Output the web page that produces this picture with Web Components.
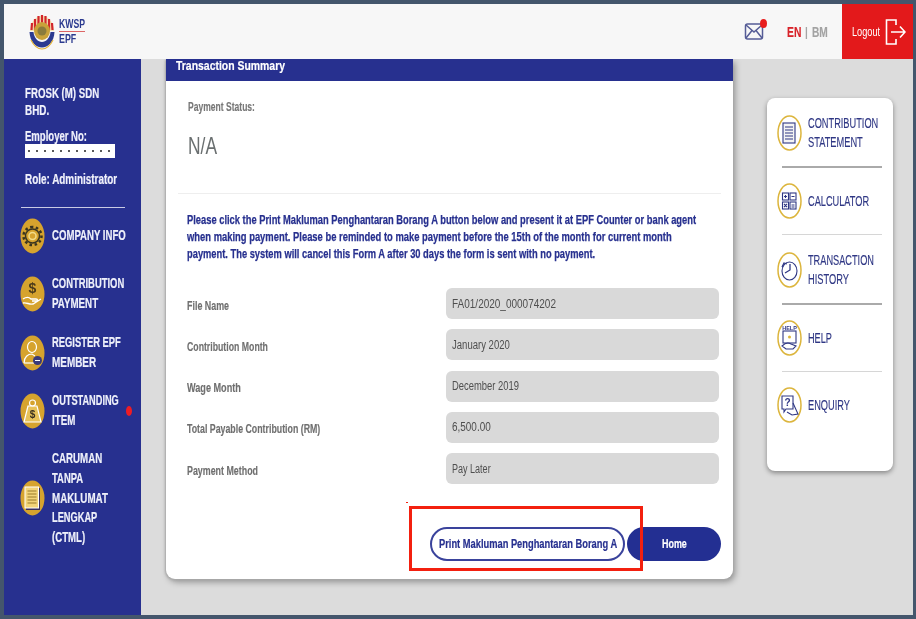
<!DOCTYPE html>
<html><head><meta charset="utf-8"><title>KWSP EPF</title>
<style>
html,body{margin:0;height:100%;overflow:hidden;background:#44566c;font-family:"Liberation Sans",Arial,sans-serif}
</style></head><body>
<kwsp-app></kwsp-app>
<script>
/* s-t: real text fitted to a target width by horizontal scaling */
class ST extends HTMLElement{
  constructor(){super();this.attachShadow({mode:'open'}).innerHTML=`<style>:host{display:inline-block;white-space:nowrap}span{display:inline-block;transform-origin:0 50%}</style><span><slot></slot></span>`}
  connectedCallback(){
    const w=+this.getAttribute('w');if(!w)return;
    const s=this.shadowRoot.querySelector('span');
    const n=s.offsetWidth;
    this.style.width=w+'px';
    if(n)s.style.transform=`scaleX(${w/n})`;
  }
}
customElements.define('s-t',ST);

class KwspHeader extends HTMLElement{
  constructor(){super();this.attachShadow({mode:'open'}).innerHTML=`<style>
  :host{display:flex;height:55px;background:#f7f7f7;align-items:center;position:relative;z-index:2}
  .logo{display:flex;align-items:center;margin-left:24px;gap:3px}
  .lt{display:flex;flex-direction:column;color:#2b3a8f;font-weight:700;font-size:13px;line-height:14px}
  .lt hr{margin:0;border:0;height:1px;background:#d66;width:26px}
  .sp{flex:1}
  .mail{position:relative;width:21px;height:21px;margin-right:22px;margin-top:-1px}
  .mail i{position:absolute;right:-2px;top:-2px;width:7px;height:9px;border-radius:50%;background:#e81e1e}
  .lang{display:flex;align-items:center;font-weight:700;font-size:14px;color:#a3a3a3;margin-right:14px;-webkit-text-stroke:.15px currentColor}
  .lang .en{color:#d8232a}
  .lang b{width:11px;text-align:center;font-weight:400;font-size:13px}
  .out{width:71px;height:55px;background:#e3191b;color:#fff;display:flex;align-items:center;font-size:12.5px;box-sizing:border-box;padding-left:10px;gap:5px}
  </style>
  <div class="logo">
    <svg width="28" height="37" viewBox="0 0 28 37">
      <path d="M2 18A12 15 0 0 1 26 18Z" fill="#f4e2b4"/>
      <g stroke="#d2262b" stroke-width="2.200"><path d="M3.500 17 4 10M7 17V6M10.500 17V3M14 17V2M17.500 17V3M21 17V6M24.500 17 24 10"/></g>
      <path d="M1.500 19C2 29 8 34.500 14 34.500S26 29 26.500 19h-4C22 25 18 29 14 29S6 25 5.500 19Z" fill="#2b3a90"/>
      <path d="M3 27C6 33 10 36 14 36S22 33 25 27" fill="none" stroke="#e1b33a" stroke-width="1.200"/>
      <ellipse cx="14" cy="18" rx="8" ry="9" fill="#c9a23a"/><circle cx="14" cy="18" r="4.500" fill="#8a7b3c"/>
    </svg>
    <div class="lt"><s-t w="26">KWSP</s-t><hr><s-t w="17">EPF</s-t></div>
  </div>
  <div class="sp"></div>
  <div class="mail">
    <svg width="21" height="21" viewBox="0 0 21 21" fill="none" stroke="#555c96" stroke-width="1.500"><rect x="1.500" y="3" width="17" height="15" rx="2"/><path d="M2 4 10 11 18 4M2 17 8 9.500M18 17 12 9.500"/></svg>
    <i></i>
  </div>
  <div class="lang"><s-t class="en" w="14">EN</s-t><b>|</b><s-t w="16">BM</s-t></div>
  <div class="out"><s-t w="28">Logout</s-t>
    <svg width="21" height="28" viewBox="0 0 21 28" fill="none" stroke="#fff" stroke-width="1.600"><path d="M11 7V2H1.500V26H11V21"/><path d="M6 14H20M15 8.500 20 14 15 19.500"/></svg>
  </div>`}
}
customElements.define('kwsp-header',KwspHeader);

class NavItem extends HTMLElement{
  constructor(){super();this.attachShadow({mode:'open'}).innerHTML=`<style>
  :host{display:flex;align-items:center;gap:7px;padding-left:16px;color:#eef0fa;font-weight:700;font-size:14px;line-height:19.7px;position:relative}
  .ic{width:25px;height:36px;flex:none;display:block}
  .t{display:flex;flex-direction:column;align-items:flex-start}
  ::slotted(i){position:absolute;left:122px;bottom:14px;width:6px;height:10px;border-radius:50%;background:#ee1c25}
  </style><span class="ic"><slot name="icon"></slot></span><div class="t"><slot></slot></div>`}
}
customElements.define('nav-item',NavItem);

class KwspSidebar extends HTMLElement{
  constructor(){super();
  const oval=(inner)=>`<svg slot="icon" width="25" height="36" viewBox="0 0 25 36"><ellipse cx="12.500" cy="18" rx="12" ry="17.500" fill="#d6a32e"/>${inner}</svg>`;
  this.attachShadow({mode:'open'}).innerHTML=`<style>
  :host{display:block;width:137px;background:#27308f;color:#f0f1fb;font-weight:700;font-size:14px;flex:none;box-sizing:border-box;padding-top:26px;-webkit-text-stroke:.2px currentColor}
  .info{padding-left:21px;line-height:17px}
  .info s-t{display:block}
  .mask{width:90px;height:14px;background:#fff;margin-bottom:13px;background-image:radial-gradient(circle,#555 0.7px,transparent 1px);background-size:8px 8px;background-position:0 3px;background-repeat:repeat-x}
  hr{border:0;height:1px;background:#c9cbe4;margin:19px 16px 0 17px}
  .nav{display:flex;flex-direction:column}
  .c{display:flex;flex-direction:column}
  </style>
  <div class="info">
    <s-t w="74">FROSK (M) SDN</s-t><s-t w="24">BHD.</s-t>
    <s-t w="62" style="margin-top:9px;line-height:16px">Employer No:</s-t><div class="mask"></div>
    <s-t w="92">Role: Administrator</s-t>
  </div>
  <hr>
  <div class="nav">
    <nav-item style="margin-top:10px">${oval(`<g fill="none" stroke="#3a3520" stroke-width="1.500"><circle cx="12.500" cy="18" r="7"/><circle cx="12.500" cy="18" r="3.500" stroke="#f2dc8a"/><path stroke-dasharray="2.500 2.500" stroke-width="2.500" d="M12.500 9a9 9 0 1 0 .01 0"/></g>`)}<s-t w="74">COMPANY INFO</s-t></nav-item>
    <nav-item style="margin-top:20px">${oval(`<text x="12.500" y="17" text-anchor="middle" font-size="14" font-family="Liberation Sans" fill="#4a3a1a" style="-webkit-text-stroke:0">$</text><path d="M3 23c3-2 6-2 8 0h5c2 0 2 2 0 2h-4M3 27c4-1 6 2 10 1l8-5" fill="none" stroke="#fff" stroke-width="1.400"/>`)}<div class="c"><s-t w="72">CONTRIBUTION</s-t><s-t w="46">PAYMENT</s-t></div></nav-item>
    <nav-item style="margin-top:20px">${oval(`<g fill="none" stroke="#fff" stroke-width="1.200"><ellipse cx="12" cy="12" rx="4.500" ry="5.500"/><path d="M4 28c0-6 4-9 8-9l3 2"/><path d="M4 28h10"/></g><circle cx="17.500" cy="25.500" r="4.500" fill="#3a3a7a"/><path d="M15 25.500h5" stroke="#fff"/>`)}<div class="c"><s-t w="69">REGISTER EPF</s-t><s-t w="44">MEMBER</s-t></div></nav-item>
    <nav-item style="margin-top:18px">${oval(`<path d="M8 13 4 29h17l-4-16Z" fill="#e8c25a" stroke="#fff" stroke-width="1.200"/><circle cx="12.500" cy="10" r="3" fill="none" stroke="#fff" stroke-width="1.200"/><text x="12.500" y="25" text-anchor="middle" font-size="10" font-weight="700" font-family="Liberation Sans" fill="#3a3020" style="-webkit-text-stroke:0">$</text>`)}<div class="c"><s-t w="67">OUTSTANDING</s-t><s-t w="23">ITEM</s-t></div><i></i></nav-item>
    <nav-item style="margin-top:19px">${oval(`<rect x="6" y="8" width="14" height="22" fill="#3a3060"/><rect x="5" y="7" width="13.500" height="21" fill="#f2d479" stroke="#fff"/><path d="M7.500 11h9M7.500 14h9M7.500 17h9M7.500 20h9M7.500 23h9" stroke="#9a7a2a"/>`)}<div class="c"><s-t w="50">CARUMAN</s-t><s-t w="31">TANPA</s-t><s-t w="56">MAKLUMAT</s-t><s-t w="45">LENGKAP</s-t><s-t w="33">(CTML)</s-t></div></nav-item>
  </div>`}
}
customElements.define('kwsp-sidebar',KwspSidebar);

class FormRow extends HTMLElement{
  constructor(){super();this.attachShadow({mode:'open'}).innerHTML=`<style>
  :host{display:flex;align-items:center;height:31px;font-size:12.500px}
  .l{width:259px;font-weight:700;color:#6f6f6f;padding-top:4px;-webkit-text-stroke:.15px currentColor}
  .v{width:273px;height:31px;background:#d9d9d9;border-radius:6px;display:flex;align-items:center;padding-left:6px;box-sizing:border-box;color:#4f4f4f;font-size:12.500px}
  </style><div class="l"><slot name="l"></slot></div><div class="v"><slot name="v"></slot></div>`}
}
customElements.define('form-row',FormRow);

class SummaryCard extends HTMLElement{
  constructor(){super();this.attachShadow({mode:'open'}).innerHTML=`<style>
  :host{display:block;width:567px;height:520px;background:#fff;border-radius:0 0 9px 9px;box-shadow:-1px 1px 2px #aaa,2px 3px 6px rgba(0,0,0,.35);position:relative;flex:none;font-family:"Liberation Sans",sans-serif}
  .h{height:22px;background:#27308f;color:#fff;font-weight:700;font-size:13.500px;padding-left:10px;line-height:14px;-webkit-text-stroke:.2px currentColor}
  .st{padding:19px 0 0 22px;color:#777;font-weight:700;font-size:12.500px;line-height:15px;-webkit-text-stroke:.15px currentColor}
  .na{padding:17px 0 0 22px;color:#6a6f70;font-size:24px;line-height:28px}
  hr{border:0;height:1px;background:#eee;margin:33px 12px 0}
  .p{padding:18px 0 0 21px;color:#27308f;font-weight:700;font-size:12.500px;line-height:17px;display:flex;flex-direction:column;align-items:flex-start;-webkit-text-stroke:.25px currentColor}
  .rows{display:flex;flex-direction:column;gap:10.250px;padding:25px 0 0 21px}
  .btns{display:flex;gap:2px;position:absolute;left:264px;top:468px;font-weight:700;font-size:12.500px;-webkit-text-stroke:.2px currentColor}
  .b{height:34px;box-sizing:border-box;border-radius:17px;display:flex;align-items:center;justify-content:center}
  .b1{width:195px;border:2px solid #3a439c;color:#27308f;background:#fff}
  .b2{width:94px;background:#232f92;color:#fff}
  .ann{position:absolute;left:243px;top:447px;width:234px;height:65px;box-sizing:border-box;border:3px solid #f3200f}
  .sp{position:absolute;left:240px;top:443px;width:2px;height:1px;background:#f3200f}
  </style>
  <div class="h"><s-t w="109">Transaction Summary</s-t></div>
  <div class="st"><s-t w="67">Payment Status:</s-t></div>
  <div class="na"><s-t w="29">N/A</s-t></div>
  <hr>
  <div class="p">
    <s-t w="509">Please click the Print Makluman Penghantaran Borang A button below and present it at EPF Counter or bank agent</s-t>
    <s-t w="485">when making payment. Please be reminded to make payment before the 15th of the month for current month</s-t>
    <s-t w="408">payment. The system will cancel this Form A after 30 days the form is sent with no payment.</s-t>
  </div>
  <div class="rows">
    <form-row><s-t slot="l" w="42">File Name</s-t><s-t slot="v" w="104">FA01/2020_000074202</s-t></form-row>
    <form-row><s-t slot="l" w="81">Contribution Month</s-t><s-t slot="v" w="58">January 2020</s-t></form-row>
    <form-row><s-t slot="l" w="54">Wage Month</s-t><s-t slot="v" w="67">December 2019</s-t></form-row>
    <form-row><s-t slot="l" w="133">Total Payable Contribution (RM)</s-t><s-t slot="v" w="39">6,500.00</s-t></form-row>
    <form-row><s-t slot="l" w="71">Payment Method</s-t><s-t slot="v" w="39">Pay Later</s-t></form-row>
  </div>
  <div class="btns"><div class="b b1"><s-t w="178">Print Makluman Penghantaran Borang A</s-t></div><div class="b b2"><s-t w="25">Home</s-t></div></div>
  <div class="ann"></div><div class="sp"></div>`}
}
customElements.define('summary-card',SummaryCard);

class SideItem extends HTMLElement{
  constructor(){super();this.attachShadow({mode:'open'}).innerHTML=`<style>
  :host{display:flex;align-items:center;gap:6px;color:#2f3784;font-size:14.500px;line-height:19px;-webkit-text-stroke:.15px currentColor}
  .ic{width:25px;height:36px;flex:none}
  .t{display:flex;flex-direction:column;align-items:flex-start}
  </style><div class="ic"><slot name="icon"></slot></div><div class="t"><slot></slot></div>`}
}
customElements.define('side-item',SideItem);

class SideMenu extends HTMLElement{
  constructor(){super();
  const oval=(inner)=>`<svg slot="icon" width="25" height="36" viewBox="0 0 25 36" style="-webkit-text-stroke:0"><ellipse cx="12.500" cy="18" rx="11.500" ry="17" fill="#fff" stroke="#dcb53c" stroke-width="1.500"/><g fill="none" stroke="#2f3784" stroke-width="1.100">${inner}</g></svg>`;
  this.attachShadow({mode:'open'}).innerHTML=`<style>
  :host{display:block;width:126px;height:373px;background:#fff;border-radius:8px;box-shadow:0 2px 5px rgba(0,0,0,.4);box-sizing:border-box;padding:16px 11px 0 10px;flex:none;margin-top:39px}
  .d{height:2px;background:#aaa;margin:15px 0 0 5px;width:100px}
  .d.l{height:1px;background:#d6d6d6}
  </style>
  <side-item>${oval(`<rect x="6" y="8" width="12" height="20" fill="#f4f4f4"/><path d="M8 12h8M8 15h8M8 18h8M8 21h8M8 24h8"/>`)}<s-t w="70">CONTRIBUTION</s-t><s-t w="55">STATEMENT</s-t></side-item>
  <div class="d" style="margin-top:14px"></div>
  <side-item style="margin-top:15px">${oval(`<rect x="5.500" y="10" width="6" height="7"/><rect x="13" y="10" width="6" height="7"/><rect x="5.500" y="19" width="6" height="7"/><rect x="13" y="19" width="6" height="7"/><path d="M7 13.500h3M8.500 12v3M14.500 13.500h3M7 21l3 3M10 21l-3 3M14.500 22h3M14.500 24h3"/>`)}<s-t w="61">CALCULATOR</s-t></side-item>
  <div class="d l"></div>
  <side-item style="margin-top:16px">${oval(`<ellipse cx="12.500" cy="19" rx="7.500" ry="9"/><path d="M13 12v6l-5 3M5 15l2-4 3 1" stroke-width="1.300"/>`)}<s-t w="66">TRANSACTION</s-t><s-t w="41">HISTORY</s-t></side-item>
  <div class="d" style="margin-top:14px"></div>
  <side-item style="margin-top:15px">${oval(`<rect x="6" y="11" width="13" height="12"/><circle cx="12.500" cy="17" r="1.500" fill="#dcb53c" stroke="none"/><path d="M5 26c3-3 6-4 9-2l5 2-3 3H9Z"/><text x="12.500" y="9.500" text-anchor="middle" font-size="5.500" font-weight="700" font-family="Liberation Sans" fill="#2f3784" stroke="none">HELP</text>`)}<s-t w="24">HELP</s-t></side-item>
  <div class="d l"></div>
  <side-item style="margin-top:15px">${oval(`<path d="M5 9h11v13H9l-2 3v-3H5Z"/><path d="M16 16l5 11-6 1-5-3"/><text x="10.500" y="19" text-anchor="middle" font-size="10" font-weight="700" font-family="Liberation Sans" fill="#2f3784" stroke="none">?</text>`)}<s-t w="42">ENQUIRY</s-t></side-item>`}
}
customElements.define('side-menu',SideMenu);

class KwspApp extends HTMLElement{
  constructor(){super();this.attachShadow({mode:'open'}).innerHTML=`<style>
  :host{display:flex;flex-direction:column;box-sizing:border-box;width:909px;height:611px;margin:4px 0 0 4px;background:#dcdcdc;overflow:hidden;filter:blur(.35px)}
  .body{display:flex;flex:1;min-height:0}
  .main{display:flex;gap:34px;padding-left:25px}
  </style>
  <kwsp-header></kwsp-header>
  <div class="body"><kwsp-sidebar></kwsp-sidebar><div class="main"><summary-card></summary-card><side-menu></side-menu></div></div>`}
}
customElements.define('kwsp-app',KwspApp);
</script>
</body></html>
